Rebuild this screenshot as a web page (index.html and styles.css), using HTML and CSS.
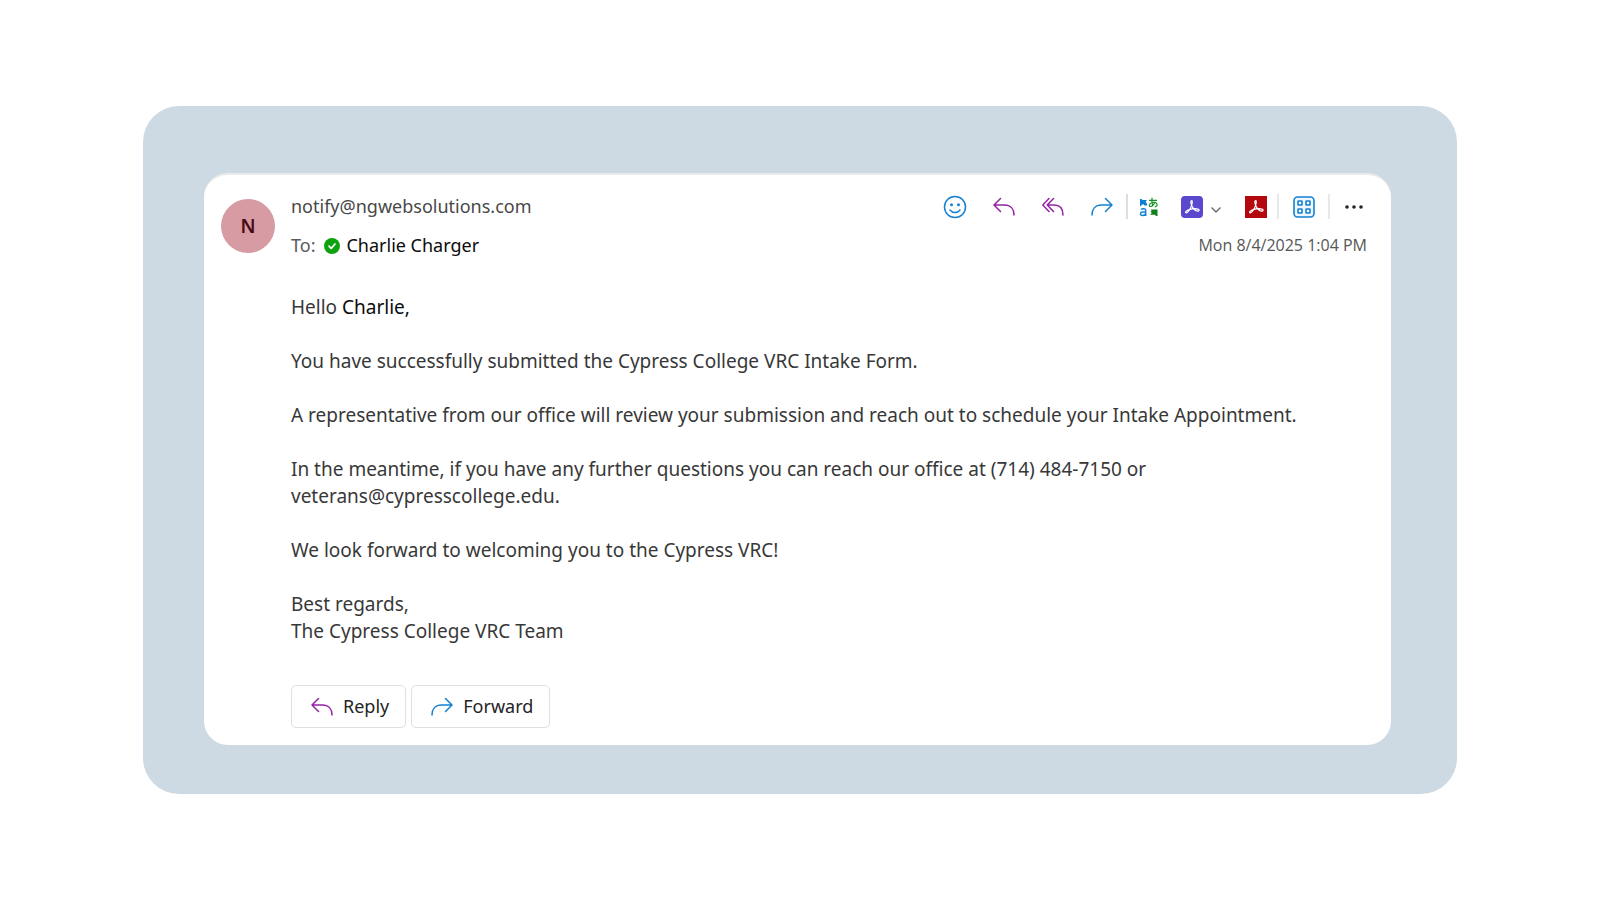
FILE: index.html
```html
<!DOCTYPE html>
<html lang="en">
<head>
<meta charset="utf-8">
<title>Message</title>
<link rel="stylesheet" href="styles.css">
</head>
<body>
<svg class="defs" aria-hidden="true">
  <symbol id="arrow-left" viewBox="0 0 22 20" fill="none" stroke="currentColor" stroke-width="1.5" stroke-linecap="round" stroke-linejoin="round"><path d="M7.500 1.500 1 8l6.500 6.500M1 8h10.500C17.500 8 21 12 21 18"/></symbol>
  <symbol id="arrow-right" viewBox="0 0 22 20" fill="none" stroke="currentColor" stroke-width="1.5" stroke-linecap="round" stroke-linejoin="round"><path d="M14.500 1.500 21 8l-6.500 6.500M21 8H10.500C4.500 8 1 12 1 18"/></symbol>
  <symbol id="acrobat" viewBox="0 0 22 22" fill="none" stroke="#fff" stroke-width="1.200" stroke-linecap="round" stroke-linejoin="round"><path d="M10.600 4.500c-1.300.2-.8 2.800.1 4.900 1.200 2.800 3.600 5.400 6 5.700 1.600.1 2-1.500.4-2-2.400-.8-6.600-.2-9.500.8-2.200.8-3.600 2.100-2.900 2.800.9.900 3.200-1.600 4.700-4.500C11 9.200 12 4.600 10.600 4.500z"/></symbol>
</svg>
<main class="frame">
  <article class="mail">
    <div class="avatar" aria-hidden="true">N</div>
    <div class="content">
      <header class="head">
        <div class="row">
          <span class="sender">notify@ngwebsolutions.com</span>
          <div class="tools">
            <button class="tool blue" aria-label="React"><svg width="24" height="24" viewBox="0 0 24 24" fill="none" stroke="currentColor" stroke-width="1.500"><circle cx="12" cy="12" r="10.500"/><circle cx="8.500" cy="9.800" r="1.500" fill="currentColor" stroke="none"/><circle cx="15.500" cy="9.800" r="1.500" fill="currentColor" stroke="none"/><path d="M7 15c2.500 3.300 7.500 3.300 10 0" stroke-linecap="round"/></svg></button>
            <button class="tool purple" aria-label="Reply to sender"><svg width="22" height="20"><use href="#arrow-left"/></svg></button>
            <button class="tool purple" aria-label="Reply all"><svg width="22" height="20" viewBox="0 0 22 20" fill="none" stroke="currentColor" stroke-width="1.500" stroke-linecap="round" stroke-linejoin="round"><path d="M7 1.500.8 8 7 14.500M11.500 1.500 5.200 8l6.300 6.500M5.200 8h7C18 8 21 12 21 18"/></svg></button>
            <button class="tool blue" aria-label="Forward message"><svg width="22" height="20"><use href="#arrow-right"/></svg></button>
            <span class="sep"></span>
            <button class="tool translate" aria-label="Translate"><svg width="20" height="20" viewBox="0 0 20 20" fill="none"><path d="M1 2h1.500l1 1H8L6.500 5 8 6.500v2H5.500L4 7 1 9.500z" fill="#0f7bd6"/><path d="M2 12.500c1.500-1.300 4.700-1.200 4.700 1V19M6.700 15H3.800C.8 15 .8 18.500 3.300 18.500c1.700 0 3.400-.8 3.400-2.500" stroke="#1583da" stroke-width="1.500"/><path d="M10 3.300h8M13 .8c-.3 3.300-.2 5.500.8 8.500M16 4.800c-1 3-3 4.700-4.500 4.700-2 0-1.700-3.500 2.500-4 4.500-.4 5.700 3.900 1.800 4.400" stroke="#159025" stroke-width="1.200"/><path d="M12 12.500h6.500V19H17l-1-1.200h-5l1.800-1.800-1.300-1.500 1-.5z" fill="#108018"/></svg></button>
            <button class="tool split" aria-label="Share with Acrobat"><svg width="22" height="22"><rect width="22" height="22" rx="4" fill="#5a48cd"/><use href="#acrobat"/></svg><svg width="10" height="6" viewBox="0 0 10 6" fill="none" stroke="#686868" stroke-width="1.300"><path d="m.5.5 4.500 4.500L9.500.5"/></svg></button>
            <button class="tool pdf" aria-label="Save as PDF"><svg width="22" height="22"><rect width="22" height="22" fill="#b4080f"/><use href="#acrobat"/></svg></button>
            <span class="sep light"></span>
            <button class="tool blue" aria-label="Apps"><svg width="22" height="22" viewBox="0 0 22 22" fill="none" stroke="currentColor" stroke-width="1.600"><rect x="1" y="1" width="20" height="20" rx="3.500" fill="#eff7fd"/><g fill="#fff"><rect x="5" y="5" width="4" height="4" rx=".6"/><rect x="13" y="5" width="4" height="4" rx=".6"/><rect x="5" y="13" width="4" height="4" rx=".6"/><rect x="13" y="13" width="4" height="4" rx=".6"/></g></svg></button>
            <span class="sep light"></span>
            <button class="tool more" aria-label="More actions"><svg width="18" height="4" fill="#242424"><circle cx="2" cy="2" r="1.800"/><circle cx="9" cy="2" r="1.800"/><circle cx="16" cy="2" r="1.800"/></svg></button>
          </div>
        </div>
        <div class="row">
          <div class="to"><span>To:</span><svg width="16" height="16" viewBox="0 0 16 16"><circle cx="8" cy="8" r="8" fill="#0ea30e"/><path d="m5 8.200 2.200 2.200L11 6" fill="none" stroke="#fff" stroke-width="1.700" stroke-linecap="round" stroke-linejoin="round"/></svg><span class="name">Charlie Charger</span></div>
          <time class="date" datetime="2025-08-04T13:04">Mon 8/4/2025 1:04 PM</time>
        </div>
      </header>
      <div class="body">
        <p>Hello <span class="name">Charlie,</span></p>
        <p>You have successfully submitted the Cypress College VRC Intake Form.</p>
        <p>A representative from our office will review your submission and reach out to schedule your Intake Appointment.</p>
        <p>In the meantime, if you have any further questions you can reach our office at (714) 484-7150 or<br>veterans@cypresscollege.edu.</p>
        <p>We look forward to welcoming you to the Cypress VRC!</p>
        <p>Best regards,<br>The Cypress College VRC Team</p>
      </div>
      <footer class="actions">
        <button class="action"><svg class="purple" width="22" height="20"><use href="#arrow-left"/></svg>Reply</button>
        <button class="action"><svg class="blue" width="22" height="20"><use href="#arrow-right"/></svg>Forward</button>
      </footer>
    </div>
  </article>
</main>
</body>
</html>
```
FILE: styles.css
```css
* { box-sizing: border-box; }
body {
  margin: 0;
  min-height: 100vh;
  display: grid;
  align-items: center;
  padding: 0 143px;
  background: #fff;
  color: #383838;
  font: 19px/27px "Noto Sans", "Open Sans", sans-serif;
}
.defs { position: absolute; width: 0; height: 0; }
.frame {
  padding: 67px 66px 49px 61px;
  border-radius: 36px;
  background: #cedae3;
}
.mail {
  display: flex;
  gap: 16px;
  padding: 12px 24px 17px 17px;
  border-radius: 24px;
  border-top: 2px solid #e9ebed;
  background: #fff;
}
.avatar {
  flex: none;
  width: 54px;
  height: 54px;
  margin-top: 12px;
  border-radius: 50%;
  background: #d79ba3;
  color: #480a14;
  font-weight: 600;
  line-height: 54px;
  text-align: center;
}
.content { flex: 1; min-width: 0; }
.row {
  display: flex;
  align-items: center;
  justify-content: space-between;
  height: 39px;
  font-size: 18px;
}
.sender { color: #484848; }
.tools { display: flex; align-items: center; height: 28px; }
.tool {
  display: flex;
  align-items: center;
  justify-content: center;
  width: 49px;
  height: 28px;
  padding: 0;
  border: 0;
  background: none;
}
.blue { color: #1580d0; }
.purple { color: #9424a4; }
.sep { width: 2px; height: 25px; background: #dedede; }
.sep.light { background: #e8e8e8; }
.translate { width: 42px; }
.split { width: 65px; gap: 8px; padding-right: 4px; }
.split svg:last-child { margin-top: 6px; }
.pdf { width: 42px; }
.more { width: 26px; margin-left: 11px; }
.to { display: flex; align-items: center; gap: 6px; color: #5c5c5c; }
.to svg { margin-left: 3px; }
.name { color: #0c0c0c; }
.date { color: #565656; font-family: "Open Sans", "Noto Sans", sans-serif; font-size: 16px; }
.body { margin-top: 29px; }
.body p { margin: 0 0 27px; }
.actions { display: flex; gap: 5px; margin-top: 40px; }
.action {
  display: flex;
  align-items: center;
  gap: 10px;
  height: 43px;
  padding: 0 16px 0 19px;
  border: 1px solid #e0e0e0;
  border-radius: 5px;
  background: #fff;
  color: #242424;
  font: inherit;
  font-size: 18px;
}
```
